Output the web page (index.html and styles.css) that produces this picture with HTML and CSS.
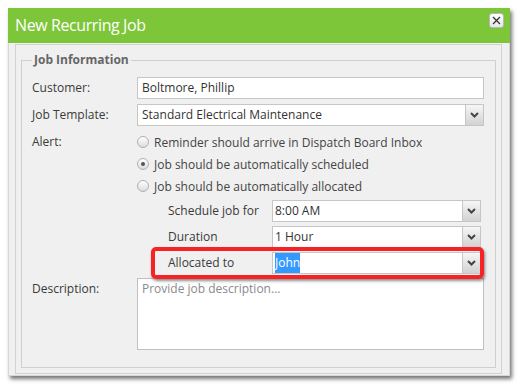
FILE: index.html
```html
<!DOCTYPE html>
<html>
<head>
<meta charset="utf-8">
<link rel="stylesheet" href="styles.css">
</head>
<body>
<div class="dialog">
  <div class="titlebar">
    <span class="title">New Recurring Job</span>
    <button class="close" type="button" aria-label="Close">
      <svg width="9" height="9" viewBox="0 0 9 9"><path d="M1 1L8 8M8 1L1 8" stroke="#333" stroke-width="1.3" fill="none"/></svg>
    </button>
  </div>
  <div class="body">
    <div class="panel">
      <fieldset class="group">
        <legend class="legend">Job Information</legend>
        <div class="row">
          <div class="lbl">Customer:</div>
          <div class="input">Boltmore, Phillip</div>
        </div>
        <div class="row">
          <div class="lbl">Job Template:</div>
          <div class="select wide"><span class="val">Standard Electrical Maintenance</span><span class="btn"><svg width="9" height="6" viewBox="0 0 9 6"><path d="M1 1L4.5 4.5L8 1" stroke="#444" stroke-width="2" fill="none"/></svg></span></div>
        </div>
        <div class="row alert">
          <div class="lbl">Alert:</div>
          <div class="ctl">
            <div class="radio"><span class="dot"></span>Reminder should arrive in Dispatch Board Inbox</div>
            <div class="radio"><span class="dot on"></span>Job should be automatically scheduled</div>
            <div class="radio"><span class="dot"></span>Job should be automatically allocated</div>
            <div class="subrow">
              <div class="sublbl">Schedule job for</div>
              <div class="select sub"><span class="val">8:00 AM</span><span class="btn"><svg width="9" height="6" viewBox="0 0 9 6"><path d="M1 1L4.5 4.5L8 1" stroke="#444" stroke-width="2" fill="none"/></svg></span></div>
            </div>
            <div class="subrow">
              <div class="sublbl">Duration</div>
              <div class="select sub"><span class="val">1 Hour</span><span class="btn"><svg width="9" height="6" viewBox="0 0 9 6"><path d="M1 1L4.5 4.5L8 1" stroke="#444" stroke-width="2" fill="none"/></svg></span></div>
            </div>
            <div class="subrow highlight">
              <div class="sublbl">Allocated to</div>
              <div class="select sub"><span class="val"><span class="sel">John</span></span><span class="btn"><svg width="9" height="6" viewBox="0 0 9 6"><path d="M1 1L4.5 4.5L8 1" stroke="#444" stroke-width="2" fill="none"/></svg></span></div>
            </div>
          </div>
        </div>
        <div class="row desc">
          <div class="lbl">Description:</div>
          <div class="textarea">Provide job description...</div>
        </div>
      </fieldset>
    </div>
  </div>
</div>
</body>
</html>
```

FILE: styles.css
```css
html, body {
  margin: 0;
  padding: 0;
  background: #ffffff;
}
body {
  padding: 8px;
  font-family: "Open Sans", "DejaVu Sans", sans-serif;
  font-size: 12px;
  color: #3a3a3a;
}
.dialog {
  width: 502px;
  height: 368px;
  box-sizing: border-box;
  background: #f0f0f0;
  border: 1px solid #d6d6d6;
  border-top: none;
  box-shadow: 2px 3px 4px rgba(0,0,0,0.55);
  display: flex;
  flex-direction: column;
}
.titlebar {
  height: 35px;
  margin: 0 -1px;
  background: #7dc63a;
  display: flex;
  justify-content: space-between;
  align-items: flex-start;
  padding: 0 6px 0 7px;
  flex: none;
}
.title {
  color: #ffffff;
  font-size: 16px;
  line-height: 35px;
  letter-spacing: -0.4px;
}
.close {
  margin-top: 5px;
  width: 15px;
  height: 15px;
  padding: 0;
  border: 1px solid #b8b8b8;
  border-radius: 3px;
  background: linear-gradient(#ffffff, #e8e8e8);
  display: flex;
  align-items: center;
  justify-content: center;
}
.body {
  flex: 1;
  padding: 1px 7px 1px 6px;
  display: flex;
}
.panel {
  flex: 1;
  border: 1px solid #d2d2d2;
  padding: 7px 5px 5px 5px;
  display: flex;
}
.group {
  flex: 1;
  margin: 0;
  border: 1px solid #cfcfcf;
  padding: 9px 10px 0 10px;
  min-width: 0;
}
.legend {
  padding: 0 2px;
  margin-left: 0;
  font-weight: bold;
  color: #666666;
  font-size: 12px;
  line-height: 16px;
}
.row {
  display: flex;
  margin-bottom: 5px;
}
.row.alert {
  margin-top: 1px;
  margin-bottom: 4px;
}
.lbl {
  width: 105px;
  flex: none;
  line-height: 22px;
  font-size: 12px;
}
.input, .select, .textarea {
  box-sizing: border-box;
  background: #ffffff;
  border: 1px solid #c6c6c6;
  height: 22px;
  font-size: 12px;
  color: #333;
}
.input {
  width: 347px;
  padding: 0 4px;
  line-height: 20px;
}
.select {
  display: flex;
}
.select.wide {
  width: 347px;
}
.select .val {
  flex: 1;
  padding-left: 4px;
  line-height: 20px;
  white-space: nowrap;
  overflow: hidden;
}
.select.sub .val {
  padding-left: 2px;
}
.select .btn {
  width: 17px;
  flex: none;
  border-left: 1px solid #c6c6c6;
  background: linear-gradient(#f6f6f6, #d2d2d2);
  display: flex;
  align-items: center;
  justify-content: center;
}
.ctl {
  display: flex;
  flex-direction: column;
}
.radio {
  height: 22px;
  display: flex;
  align-items: center;
  font-size: 12px;
  color: #444;
}
.dot {
  width: 10px;
  height: 10px;
  border: 1px solid #b0b0b0;
  border-radius: 50%;
  background: linear-gradient(#ffffff, #dcdcdc);
  margin-right: 5px;
  position: relative;
  flex: none;
}
.dot.on::after {
  content: "";
  position: absolute;
  left: 3px;
  top: 3px;
  width: 4px;
  height: 4px;
  border-radius: 50%;
  background: #555;
}
.subrow {
  display: flex;
  margin-left: 31px;
  margin-top: 4px;
  height: 22px;
}
.radio + .subrow {
  margin-top: 3px;
}
.sublbl {
  width: 104px;
  flex: none;
  line-height: 22px;
  font-size: 12px;
}
.select.sub {
  width: 209px;
}
.highlight {
  position: relative;
}
.highlight::after {
  content: "";
  position: absolute;
  top: -5px;
  left: -17px;
  right: -3px;
  bottom: -5px;
  border: 4px solid #f52323;
  border-radius: 5px;
  box-shadow: 1px 2px 3px rgba(0,0,0,0.45);
  pointer-events: none;
}
.sel {
  background: #3399ff;
  color: #ffffff;
  display: inline-block;
  line-height: 20px;
}
.textarea {
  width: 347px;
  height: 72px;
  padding: 2px 4px;
  line-height: 16px;
  color: #8a8a8a;
  border-color: #c0c0c0;
}
.row.desc {
  margin-bottom: 0;
}
```
